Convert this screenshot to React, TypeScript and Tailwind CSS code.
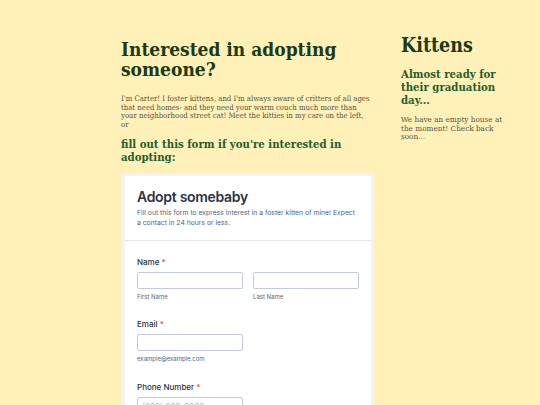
const slab = "font-['DejaVu_Serif_Condensed','DejaVu_Serif',serif]";
const ui = "font-['Inter','Liberation_Sans',sans-serif]";

function Label({ text }: { text: string }) {
  return (
    <div className="mb-[4px] text-[8px] font-medium leading-[12px] text-[#2c3345]">
      {text} <span className="text-[#f23a3c]">*</span>
    </div>
  );
}

function Input({ sub, placeholder }: { sub?: string; placeholder?: string }) {
  return (
    <div className="w-[106px]">
      <div className="flex h-[17px] items-center rounded-[2px] border border-[#c3cad8] bg-white px-[4px] text-[8px] text-[#b7bdca]">
        {placeholder}
      </div>
      {sub && <div className="mt-[4px] text-[6px] leading-[8px] text-[#57647e]">{sub}</div>}
    </div>
  );
}

export default function App() {
  return (
    <div className="h-[405px] w-[540px] overflow-hidden bg-[#fff1b8]">
      <div className="flex gap-[28px] pl-[121px] pt-[35px]">
        {/* Main column */}
        <main className="w-[252px] pt-[4px]">
          <h1 className={`${slab} text-[19px] font-bold leading-[20px] text-[#1b3a16]`}>
            Interested in adopting someone?
          </h1>
          <p className={`${slab} mt-[16px] text-[7.7px] leading-[8.5px] text-[#5b5246]`}>
            I'm Carter! I foster kittens, and I'm always aware of critters of all ages that need homes- and they need your warm couch much more than your neighborhood street cat! Meet the kitties in my care on the left, or
          </p>
          <h2 className={`${slab} mt-[9px] text-[11.3px] font-bold leading-[13px] text-[#1e5f2e]`}>
            fill out this form if you're interested in adopting:
          </h2>

          <div className={`${ui} ml-[1px] mt-[9px] w-[252px] border-[3px] border-b-0 border-[#f2f2fd] bg-white`}>
            <div className="border-b border-[#e6e6ee] px-[12px] pb-[12px] pt-[12px]">
              <div className="text-[14px] font-semibold leading-[18px] tracking-[-0.3px] text-[#2c3345]">
                Adopt somebaby
              </div>
              <div className="mt-[2px] text-[6.8px] leading-[10px] text-[#57647e]">
                Fill out this form to express interest in a foster kitten of mine! Expect a contact in 24 hours or less.
              </div>
            </div>
            <div className="px-[12px] pt-[15px]">
              <Label text="Name" />
              <div className="flex gap-[10px]">
                <Input sub="First Name" />
                <Input sub="Last Name" />
              </div>
              <div className="mt-[17px]">
                <Label text="Email" />
                <Input sub="example@example.com" />
              </div>
              <div className="mt-[18px]">
                <Label text="Phone Number" />
                <Input placeholder="(000) 000-0000" />
              </div>
            </div>
          </div>
        </main>

        {/* Sidebar */}
        <aside className="w-[110px]">
          <h2 className={`${slab} text-[19.5px] font-bold leading-[22px] text-[#1b3a16]`}>Kittens</h2>
          <h3 className={`${slab} mt-[11px] text-[11.3px] font-bold leading-[13px] text-[#1e5f2e]`}>
            Almost ready for their graduation day...
          </h3>
          <p className={`${slab} mt-[8px] text-[8.1px] leading-[8.5px] text-[#5b5246]`}>
            We have an empty house at the moment! Check back soon...
          </p>
        </aside>
      </div>
    </div>
  );
}
